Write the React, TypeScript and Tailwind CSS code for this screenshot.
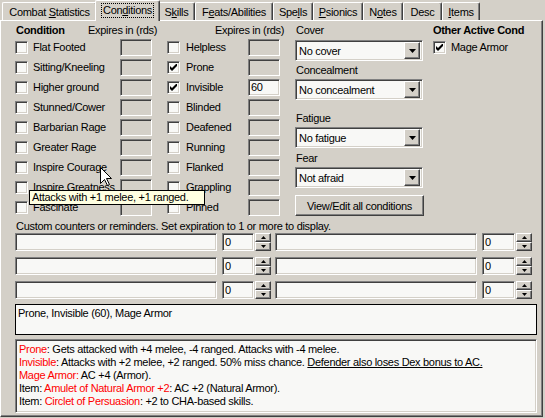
import React from 'react'

const sunken =
  'border border-t-[#808080] border-l-[#808080] border-b-white border-r-white shadow-[inset_1px_1px_0_#404040,inset_-1px_-1px_0_#d4d0c8]'
const raised =
  'border border-t-white border-l-white border-r-[#404040] border-b-[#404040] shadow-[inset_-1px_-1px_0_#808080]'

const LEFT = [
  'Flat Footed',
  'Sitting/Kneeling',
  'Higher ground',
  'Stunned/Cower',
  'Barbarian Rage',
  'Greater Rage',
  'Inspire Courage',
  'Inspire Greatness',
  'Fascinate',
]

const MIDDLE: { label: string; checked?: boolean; value?: string }[] = [
  { label: 'Helpless' },
  { label: 'Prone', checked: true },
  { label: 'Invisible', checked: true, value: '60' },
  { label: 'Blinded' },
  { label: 'Deafened' },
  { label: 'Running' },
  { label: 'Flanked' },
  { label: 'Grappling' },
  { label: 'Pinned' },
]

const TABS: { w: string; node: React.ReactNode; selected?: boolean }[] = [
  { w: 'w-[95px]', node: <span>Combat <u>S</u>tatistics</span> },
  { w: 'w-[65px]', node: <span>Con<u>d</u>itions</span>, selected: true },
  { w: 'w-[37px]', node: <span>S<u>k</u>ills</span> },
  { w: 'w-[78px]', node: <span>F<u>e</u>ats/Abilities</span> },
  { w: 'w-[40px]', node: <span>Spe<u>l</u>ls</span> },
  { w: 'w-[50px]', node: <span><u>P</u>sionics</span> },
  { w: 'w-[40px]', node: <span>N<u>o</u>tes</span> },
  { w: 'w-[39px]', node: <span>Desc</span> },
  { w: 'w-[38px]', node: <span><u>I</u>tems</span> },
]

function Check({ checked }: { checked?: boolean }) {
  return (
    <span className={`flex h-[13px] w-[13px] shrink-0 items-center justify-center bg-[#f8f8f6] ${sunken}`}>
      {checked && (
        <svg width="7" height="7" viewBox="0 0 7 7">
          <path d="M0 2L2 4L7 -1L7 2L2 7L0 5Z" fill="#000" />
        </svg>
      )}
    </span>
  )
}

function ExpBox({ value }: { value?: string }) {
  return (
    <span
      className={`ml-auto flex h-[17px] w-[32px] shrink-0 items-center pl-[2px] ${sunken} ${
        value ? 'bg-[#f8f8f6]' : 'bg-[#d4d0c8]'
      }`}
    >
      {value}
    </span>
  )
}

function Dropdown({ text }: { text: string }) {
  return (
    <div className={`flex h-[21px] w-[128px] items-center bg-[#f8f8f6] pl-[3px] pr-[2px] ${sunken}`}>
      <span className="flex-1">{text}</span>
      <span className={`flex h-[17px] w-[16px] items-center justify-center bg-[#d4d0c8] ${raised}`}>
        <svg width="7" height="4" viewBox="0 0 7 4">
          <path d="M0 0H7L3.5 4Z" fill="#000" />
        </svg>
      </span>
    </div>
  )
}

function Spin() {
  return (
    <div className="flex w-[16px] flex-col">
      <span className={`flex h-[9px] items-center justify-center bg-[#d4d0c8] ${raised}`}>
        <svg width="5" height="3" viewBox="0 0 5 3">
          <path d="M2.5 0L5 3H0Z" fill="#000" />
        </svg>
      </span>
      <span className={`flex h-[9px] items-center justify-center bg-[#d4d0c8] ${raised}`}>
        <svg width="5" height="3" viewBox="0 0 5 3">
          <path d="M0 0H5L2.5 3Z" fill="#000" />
        </svg>
      </span>
    </div>
  )
}

function CounterRow() {
  return (
    <div className="flex h-[18px] items-stretch">
      <span className={`w-[202px] bg-[#f8f8f6] ${sunken}`} />
      <span className={`ml-[5px] flex w-[32px] items-center bg-[#f8f8f6] pl-[2px] ${sunken}`}>0</span>
      <span className="ml-[1px]"><Spin /></span>
      <span className={`ml-[4px] w-[202px] bg-[#f8f8f6] ${sunken}`} />
      <span className={`ml-[5px] flex w-[33px] items-center bg-[#f8f8f6] pl-[2px] ${sunken}`}>0</span>
      <span className="ml-[1px]"><Spin /></span>
    </div>
  )
}

const red = 'text-[#ff0000]'

export default function App() {
  return (
    <div className="relative h-[418px] w-[545px] overflow-hidden bg-[#d4d0c8] font-['Liberation_Sans',Arial,sans-serif] text-[11px] leading-[14px] tracking-[-0.3px] text-black">
      {/* tab strip */}
      <div className="flex h-[20px] items-end pl-[2px]">
        {TABS.map((t, i) => (
          <div
            key={i}
            className={`flex shrink-0 items-center justify-center rounded-t-[2px] border-l border-t border-r border-l-white border-t-white border-r-[#404040] bg-[#d4d0c8] shadow-[inset_-1px_0_0_#808080] ${t.w} ${
              t.selected ? 'relative z-10 -mx-[2px] -mb-[1px] h-[21px] pb-[1px]' : 'h-[18px]'
            }`}
          >
            {t.selected ? (
              <span className="border border-dotted border-black px-[1px] leading-[13px]">{t.node}</span>
            ) : (
              t.node
            )}
          </div>
        ))}
      </div>

      {/* page body */}
      <div className="h-[397px] w-[543px] overflow-hidden border border-l-white border-t-white border-r-[#404040] border-b-[#404040] shadow-[inset_-1px_-1px_0_#808080]">
        <div className="flex pl-[14px] pt-[2px]">
          {/* left conditions */}
          <div className="w-[137px] shrink-0">
            <div className="flex h-[14px] items-center">
              <span className="w-[73px] shrink-0 pl-[1px] font-bold">Condition</span>
              <span className="whitespace-nowrap">Expires in (rds)</span>
            </div>
            {LEFT.map((l) => (
              <div key={l} className="flex h-[20px] items-center">
                <Check />
                <span className="ml-[5px] whitespace-nowrap">{l}</span>
                <ExpBox />
              </div>
            ))}
          </div>

          {/* middle conditions */}
          <div className="ml-[15px] w-[113px] shrink-0">
            <div className="flex h-[14px] items-center">
              <span className="w-[48px] shrink-0" />
              <span className="whitespace-nowrap">Expires in (rds)</span>
            </div>
            {MIDDLE.map((m) => (
              <div key={m.label} className="flex h-[20px] items-center">
                <Check checked={m.checked} />
                <span className="ml-[6px] whitespace-nowrap">{m.label}</span>
                <ExpBox value={m.value} />
              </div>
            ))}
          </div>

          {/* dropdowns */}
          <div className="ml-[15px] w-[128px] shrink-0">
            <div className="h-[14px] pl-[1px]">Cover</div>
            <div className="mt-[3px]"><Dropdown text="No cover" /></div>
            <div className="mt-[2px] h-[14px] pl-[1px]">Concealment</div>
            <div className="mt-[2px]"><Dropdown text="No concealment" /></div>
            <div className="mt-[11px] h-[14px] pl-[1px]">Fatigue</div>
            <div className="mt-[2px]"><Dropdown text="No fatigue" /></div>
            <div className="mt-[3px] h-[14px] pl-[1px]">Fear</div>
            <div className="mt-[2px]"><Dropdown text="Not afraid" /></div>
            <button
              className={`mt-[7px] flex h-[21px] w-[129px] items-center justify-center bg-[#d4d0c8] ${raised}`}
            >
              View/Edit all conditions
            </button>
          </div>

          {/* other active */}
          <div className="ml-[10px] shrink-0">
            <div className="h-[14px] whitespace-nowrap font-bold">Other Active Cond</div>
            <div className="mt-[3px] flex h-[14px] items-center">
              <Check checked />
              <span className="ml-[5px]">Mage Armor</span>
            </div>
          </div>
        </div>

        {/* custom counters */}
        <div className="pl-[14px]">
          <div className="mt-[2px] h-[14px] pl-[1px]">
            Custom counters or reminders. Set expiration to 1 or more to display.
          </div>
          <div className="flex flex-col gap-[6px]">
            <CounterRow />
            <CounterRow />
            <CounterRow />
          </div>

          <div className="mt-[5px] h-[31px] w-[522px] border border-black bg-[#f8f8f6] pl-[2px] pt-[1px]">
            Prone, Invisible (60), Mage Armor
          </div>

          <div className={`mt-[4px] h-[74px] w-[522px] bg-[#f8f8f6] pl-[3px] pt-[3px] leading-[13px] ${sunken}`}>
            <p>
              <span className={red}>Prone</span>: Gets attacked with +4 melee, -4 ranged. Attacks with -4 melee.
            </p>
            <p>
              <span className={red}>Invisible</span>: Attacks with +2 melee, +2 ranged. 50% miss chance.{' '}
              <u>Defender also loses Dex bonus to AC.</u>
            </p>
            <p>
              <span className={red}>Mage Armor:</span> AC +4 (Armor).
            </p>
            <p>
              Item: <span className={red}>Amulet of Natural Armor +2</span>: AC +2 (Natural Armor).
            </p>
            <p>
              Item: <span className={red}>Circlet of Persuasion</span>: +2 to CHA-based skills.
            </p>
          </div>
        </div>
      </div>

      {/* tooltip */}
      <div className="absolute left-[29px] top-[190px] z-20 h-[15px] w-[176px] whitespace-nowrap border border-black bg-[#ffffe1] pl-[2px] leading-[13px]">
        Attacks with +1 melee, +1 ranged.
      </div>

      {/* mouse pointer */}
      <svg className="absolute left-[100px] top-[167px] z-30" width="13" height="20" viewBox="0 0 13 20">
        <path d="M0.5 0.5L0.5 16.5L4.5 12.5L7.5 18.5L9.5 17.5L6.5 11.5L11.5 11.5Z" fill="#fff" stroke="#000" />
      </svg>
    </div>
  )
}
